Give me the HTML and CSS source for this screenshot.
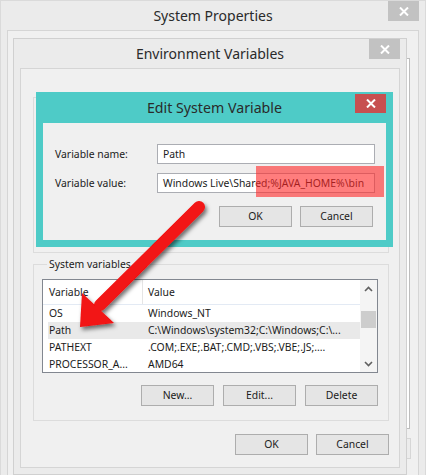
FILE: index.html
```html
<!DOCTYPE html>
<html>
<head>
<meta charset="utf-8">
<link rel="stylesheet" href="styles.css">
</head>
<body>
<div class="desk">
  <div class="win sys">
    <div class="tbar">
      <span></span>
      <div class="ttl">System Properties</div>
      <div class="xbtn gray"><svg width="10" height="9" viewBox="0 0 10 9"><path d="M1 0.5 L9 8.5 M9 0.5 L1 8.5" stroke="#fff" stroke-width="2"/></svg></div>
    </div>
    <div class="sysclient">
      <div class="tabpane"></div>
      <div class="ghostbtn"></div>
    </div>
  </div>

  <div class="win env">
    <div class="tbar">
      <span></span>
      <div class="ttl">Environment Variables</div>
      <div class="xbtn gray"><svg width="10" height="9" viewBox="0 0 10 9"><path d="M1 0.5 L9 8.5 M9 0.5 L1 8.5" stroke="#fff" stroke-width="2"/></svg></div>
    </div>
    <div class="envclient">
      <fieldset class="group user">
        <legend>User variables for Default</legend>
        <div class="userbody"></div>
      </fieldset>
      <fieldset class="group sysvars">
        <legend>System variables</legend>
        <div class="listbox">
          <div class="listmain">
            <div class="lrow head"><span class="c1">Variable</span><span class="c2">Value</span></div>
            <div class="lrow"><span class="c1">OS</span><span class="c2">Windows_NT</span></div>
            <div class="lrow sel"><span class="c1">Path</span><span class="c2">C:\Windows\system32;C:\Windows;C:\...</span></div>
            <div class="lrow"><span class="c1">PATHEXT</span><span class="c2">.COM;.EXE;.BAT;.CMD;.VBS;.VBE;.JS;....</span></div>
            <div class="lrow"><span class="c1">PROCESSOR_A...</span><span class="c2">AMD64</span></div>
          </div>
          <div class="vscroll">
            <div class="sarrow"><svg width="9" height="6" viewBox="0 0 9 6"><path d="M1 5 L4.5 1.5 L8 5" fill="none" stroke="#606060" stroke-width="1.6"/></svg></div>
            <div class="strack"><div class="thumb"></div></div>
            <div class="sarrow"><svg width="9" height="6" viewBox="0 0 9 6"><path d="M1 1 L4.5 4.5 L8 1" fill="none" stroke="#606060" stroke-width="1.6"/></svg></div>
          </div>
        </div>
        <div class="btnrow">
          <div class="btn">New...</div>
          <div class="btn">Edit...</div>
          <div class="btn">Delete</div>
        </div>
      </fieldset>
      <div class="btnrow bottom">
        <div class="btn">OK</div>
        <div class="btn">Cancel</div>
      </div>
    </div>
  </div>

  <div class="win edit">
    <div class="tbar etbar">
      <span></span>
      <div class="ttl">Edit System Variable</div>
      <div class="xbtn red"><svg width="10" height="9" viewBox="0 0 10 9"><path d="M1 0.5 L9 8.5 M9 0.5 L1 8.5" stroke="#fff" stroke-width="2"/></svg></div>
    </div>
    <div class="editclient">
      <div class="frow">
        <span class="flabel">Variable name:</span>
        <div class="input">Path</div>
      </div>
      <div class="frow">
        <span class="flabel">Variable value:</span>
        <div class="input">Windows Live\Shared;%JAVA_HOME%\bin</div>
      </div>
      <div class="btnrow edbtns">
        <div class="btn">OK</div>
        <div class="btn">Cancel</div>
      </div>
    </div>
  </div>

  <div class="hl"></div>

  <svg class="arrow" width="426" height="475" viewBox="0 0 426 475">
    <defs>
      <filter id="sh" x="-30%" y="-30%" width="160%" height="160%">
        <feDropShadow dx="2" dy="3" stdDeviation="2.2" flood-color="#000" flood-opacity="0.55"/>
      </filter>
    </defs>
    <g filter="url(#sh)" fill="#f21212" stroke="none">
      <line x1="199" y1="207" x2="100" y2="305" stroke="#f21212" stroke-width="12" stroke-linecap="round"/>
      <polygon points="80,327 82,293 114,323"/>
    </g>
  </svg>
</div>
</body>
</html>
```

FILE: styles.css
```css
html, body {
  margin: 0;
  padding: 0;
}
body {
  width: 426px;
  height: 475px;
  overflow: hidden;
  font-family: "Noto Sans", "Open Sans", sans-serif;
  font-size: 10.4px;
  color: #1b1b1b;
}
.desk {
  position: relative;
  width: 426px;
  height: 475px;
  overflow: hidden;
  background: #ebebeb;
}
.win {
  box-sizing: border-box;
  display: flex;
  flex-direction: column;
}
.tbar {
  display: grid;
  grid-template-columns: 1fr auto 1fr;
  align-items: start;
  height: 29px;
  flex: none;
}
.ttl {
  font-size: 14px;
  line-height: 29px;
  color: #2a2a2a;
  white-space: nowrap;
}
.xbtn {
  justify-self: end;
  width: 31px;
  height: 20px;
  display: flex;
  align-items: center;
  justify-content: center;
}
.xbtn.gray { background: #c2c2c2; }
.xbtn.red { background: #c75050; }

/* System Properties */
.sys {
  width: 426px;
  height: 475px;
  border: 1px solid #dadada;
  border-bottom: none;
  background: #ebebeb;
  padding: 0 6px;
}
.sysclient {
  flex: 1;
  border: 1px solid #d5d5d5;
  border-bottom: none;
  background: #f0f0f0;
  padding: 27px 8px 0 7px;
  display: flex;
  flex-direction: column;
}
.tabpane {
  height: 371px;
  box-sizing: border-box;
  background: #fff;
  border: 1px solid #bdbdbd;
  flex: none;
}
.ghostbtn {
  align-self: flex-end;
  margin-top: 9px;
  margin-right: -1px;
  width: 73px;
  height: 21px;
  box-sizing: border-box;
  border: 1px solid #d6d6d6;
  background: #ececec;
}

/* Environment Variables */
.env {
  position: absolute;
  left: 13px;
  top: 38px;
  width: 394px;
  height: 437px;
  border: 1px solid #d0d0d0;
  background: #ebebeb;
  padding: 0 6px 6px 6px;
}
.envclient {
  height: 400px;
  box-sizing: border-box;
  border: 1px solid #d5d5d5;
  background: #f0f0f0;
  padding: 20px 10px 12px 12px;
  display: flex;
  flex-direction: column;
}
.group {
  margin: 0;
  padding: 0;
  border: 1px solid #dcdcdc;
  min-width: 0;
}
.group legend {
  padding: 0 2px;
  margin-left: 5px;
  line-height: 16px;
  height: 16px;
  white-space: nowrap;
}
.userbody { height: 147px; }
.sysvars {
  margin-top: 3px;
  padding: 7px 10px 14px 8px;
}
.listbox {
  height: 94px;
  box-sizing: border-box;
  border: 1px solid #828790;
  background: #fff;
  display: flex;
  overflow: hidden;
}
.listmain {
  flex: 1;
  min-width: 0;
}
.lrow {
  display: flex;
  height: 17px;
  line-height: 17px;
  white-space: nowrap;
}
.lrow.head {
  height: 25px;
  line-height: 24px;
  box-sizing: border-box;
  border-bottom: 1px solid #e3eaf4;
}
.lrow .c1 {
  width: 100px;
  box-sizing: border-box;
  padding-left: 6px;
  flex: none;
}
.lrow .c2 {
  padding-left: 5px;
  overflow: hidden;
}
.lrow.head .c1 {
  border-right: 1px solid #e5e5e5;
}
.lrow.sel {
  background: linear-gradient(to right, #fff 0, #fff 5px, #e9e9e9 5px);
}
.vscroll {
  width: 17px;
  flex: none;
  background: #f4f4f4;
  display: flex;
  flex-direction: column;
}
.sarrow {
  height: 17px;
  display: flex;
  align-items: center;
  justify-content: center;
  flex: none;
}
.strack {
  flex: 1;
  padding-top: 14px;
}
.thumb {
  height: 17px;
  margin: 0 1px;
  background: #cdcdcd;
}
.btnrow {
  display: flex;
  justify-content: flex-end;
  gap: 9px;
  margin-top: 12px;
}
.btnrow.bottom {
  margin-top: 13px;
  gap: 8px;
}
.btn {
  width: 73px;
  height: 21px;
  box-sizing: border-box;
  border: 1px solid #adadad;
  background: #e5e5e5;
  text-align: center;
  line-height: 19px;
}

/* Edit System Variable */
.edit {
  position: absolute;
  left: 36px;
  top: 92px;
  width: 357px;
  height: 155px;
  background: #4ecbc7;
  padding: 0 7px 7px 7px;
}
.etbar {
  height: 31px;
}
.etbar .ttl {
  line-height: 31px;
  font-size: 14.2px;
}
.etbar .xbtn {
  margin-top: 2px;
  height: 19px;
}
.editclient {
  height: 117px;
  box-sizing: border-box;
  background: #f0f0f0;
  padding: 21px 11px 13px 12px;
  display: flex;
  flex-direction: column;
  gap: 9px;
}
.frow {
  display: grid;
  grid-template-columns: 102px 1fr;
  align-items: center;
  height: 20px;
}
.input {
  height: 20px;
  box-sizing: border-box;
  border: 1px solid #abadb3;
  background: #fff;
  padding-left: 5px;
  line-height: 18px;
  white-space: nowrap;
  overflow: hidden;
}
.edbtns {
  margin-top: 4px;
  gap: 8px;
  padding-right: 2px;
}

.hl {
  position: absolute;
  left: 256px;
  top: 166px;
  width: 128px;
  height: 31px;
  background: rgba(255, 38, 38, 0.6);
}
.arrow {
  position: absolute;
  left: 0;
  top: 0;
  pointer-events: none;
}
```
